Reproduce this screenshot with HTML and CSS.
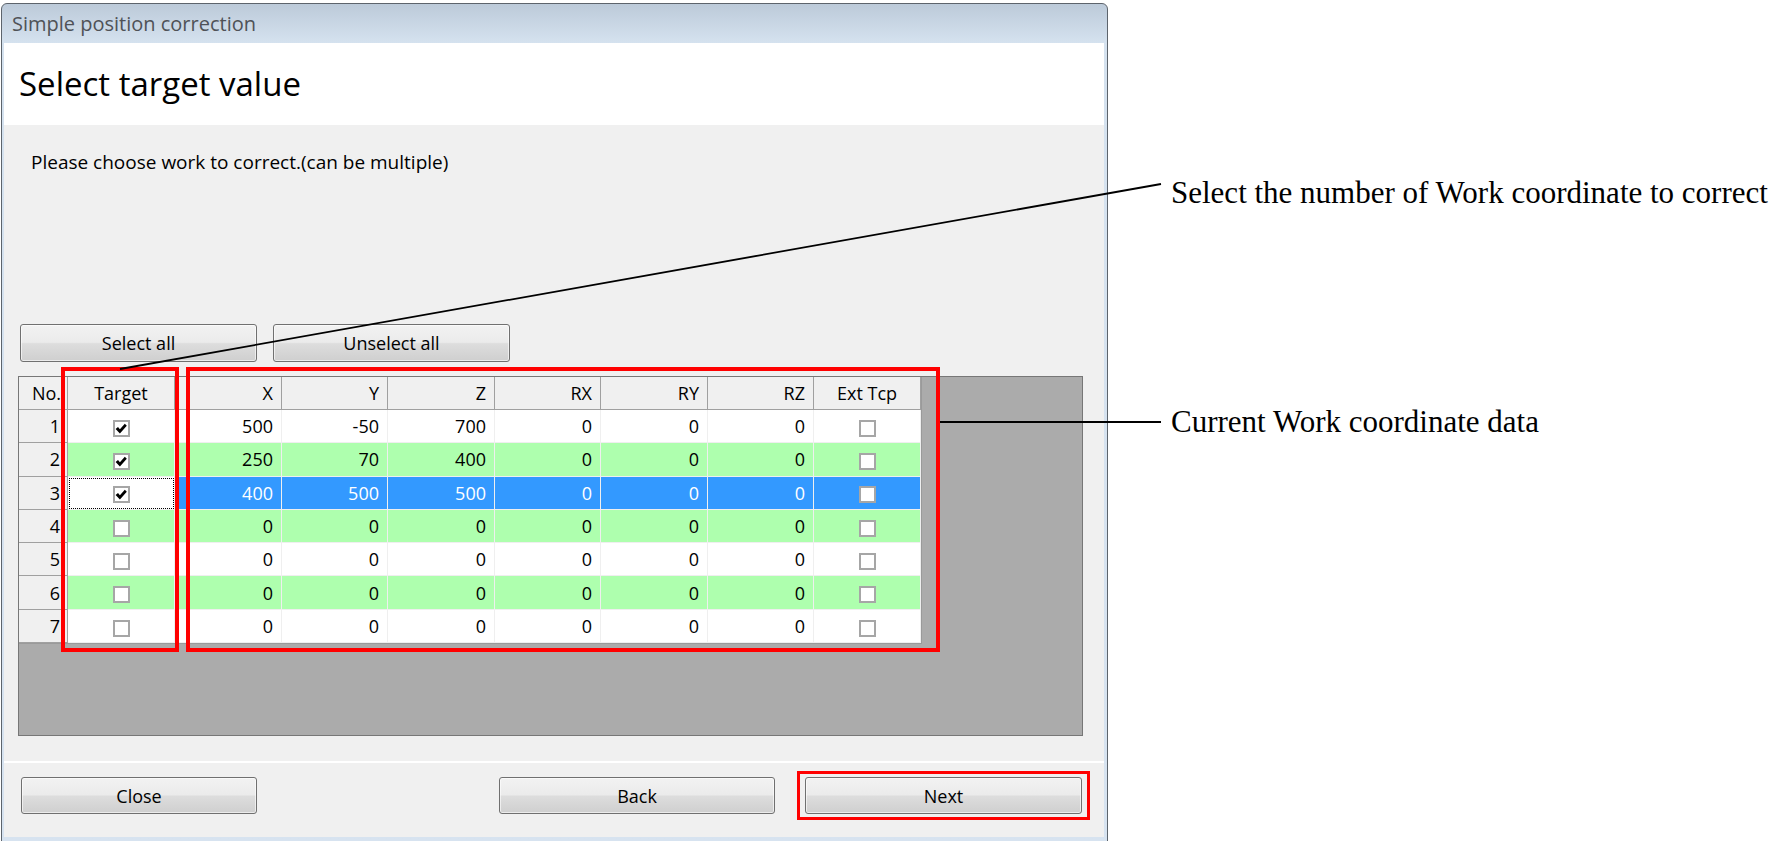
FILE: index.html
```html
<!DOCTYPE html>
<html lang="en">
<head>
    <meta charset="UTF-8">
    <title>Simple position correction</title>
    <link rel="stylesheet" href="styles.css">
</head>
<body>
    <div class="dialog">
        <div class="titlebar">Simple position correction</div>

        <div class="client">
            <div class="header">
                <h1>Select target value</h1>
            </div>

            <div class="main">
                <p class="hint">Please choose work to correct.(can be multiple)</p>

                <div class="select-row">
                    <button class="btn btn-select">Select all</button>
                    <button class="btn btn-select">Unselect all</button>
                </div>

                <div class="grid-area">
                    <table class="grid">
                        <colgroup>
                            <col class="col-no">
                            <col class="col-w"><col class="col-w"><col class="col-n">
                            <col class="col-w"><col class="col-n"><col class="col-w">
                            <col class="col-n"><col class="col-w">
                        </colgroup>
                        <thead>
                            <tr>
                                <th class="num">No.</th>
                                <th class="mid">Target</th>
                                <th>X</th>
                                <th>Y</th>
                                <th>Z</th>
                                <th>RX</th>
                                <th>RY</th>
                                <th>RZ</th>
                                <th class="mid">Ext Tcp</th>
                            </tr>
                        </thead>
                        <tbody>
                            <tr>
                                <td class="num">1</td>
                                <td class="mid"><span class="chk"><svg class="tick" viewBox="0 0 12 11"><path d="M0.6 5.9 L3 3.9 L4.9 6.2 L9.8 0.7 L11.8 2.8 L4.9 10.4 Z"/></svg></span></td>
                                <td>500</td><td>-50</td><td>700</td><td>0</td><td>0</td><td>0</td>
                                <td class="mid"><span class="chk"></span></td>
                            </tr>
                            <tr class="alt">
                                <td class="num">2</td>
                                <td class="mid"><span class="chk"><svg class="tick" viewBox="0 0 12 11"><path d="M0.6 5.9 L3 3.9 L4.9 6.2 L9.8 0.7 L11.8 2.8 L4.9 10.4 Z"/></svg></span></td>
                                <td>250</td><td>70</td><td>400</td><td>0</td><td>0</td><td>0</td>
                                <td class="mid"><span class="chk"></span></td>
                            </tr>
                            <tr class="current">
                                <td class="num">3</td>
                                <td class="mid focus"><span class="chk"><svg class="tick" viewBox="0 0 12 11"><path d="M0.6 5.9 L3 3.9 L4.9 6.2 L9.8 0.7 L11.8 2.8 L4.9 10.4 Z"/></svg></span></td>
                                <td>400</td><td>500</td><td>500</td><td>0</td><td>0</td><td>0</td>
                                <td class="mid"><span class="chk"></span></td>
                            </tr>
                            <tr class="alt">
                                <td class="num">4</td>
                                <td class="mid"><span class="chk"></span></td>
                                <td>0</td><td>0</td><td>0</td><td>0</td><td>0</td><td>0</td>
                                <td class="mid"><span class="chk"></span></td>
                            </tr>
                            <tr>
                                <td class="num">5</td>
                                <td class="mid"><span class="chk"></span></td>
                                <td>0</td><td>0</td><td>0</td><td>0</td><td>0</td><td>0</td>
                                <td class="mid"><span class="chk"></span></td>
                            </tr>
                            <tr class="alt">
                                <td class="num">6</td>
                                <td class="mid"><span class="chk"></span></td>
                                <td>0</td><td>0</td><td>0</td><td>0</td><td>0</td><td>0</td>
                                <td class="mid"><span class="chk"></span></td>
                            </tr>
                            <tr>
                                <td class="num">7</td>
                                <td class="mid"><span class="chk"></span></td>
                                <td>0</td><td>0</td><td>0</td><td>0</td><td>0</td><td>0</td>
                                <td class="mid"><span class="chk"></span></td>
                            </tr>
                        </tbody>
                    </table>
                </div>
            </div>

            <div class="footer">
                <button class="btn btn-close">Close</button>
                <button class="btn btn-back">Back</button>
                <button class="btn btn-next">Next</button>
            </div>
        </div>
    </div>

    <!-- annotation overlay -->
    <div class="mark mark-target"></div>
    <div class="mark mark-data"></div>
    <div class="mark mark-next"></div>

    <svg class="callouts" width="1776" height="841">
        <line x1="120" y1="369" x2="1161" y2="184" />
        <line x1="940" y1="422" x2="1161" y2="422" />
    </svg>

    <p class="note note-select">Select the number of Work coordinate to correct</p>
    <p class="note note-current">Current Work coordinate data</p>
</body>
</html>
```

FILE: styles.css
```css
html, body {
    margin: 0;
    padding: 0;
    height: 100%;
    overflow: hidden;
    background: #fff;
}

body {
    position: relative;
    font-family: "Open Sans", "Noto Sans", sans-serif;
    color: #000;
}

/* Window frame */
.dialog {
    margin: 3px 0 0 1px;
    width: 1107px;
    height: 860px;
    box-sizing: border-box;
    border: 1px solid #5d646c;
    border-radius: 6px 6px 0 0;
    padding: 0 3px 0 2px;
    background: linear-gradient(#bccad9 0, #d5e2ef 39px, #d7e3f0 100%);
}

.titlebar {
    height: 39px;
    line-height: 39px;
    padding-left: 8px;
    font-size: 20px;
    color: #4f5257;
}

.client {
    background: #f0f0f0;
}

.header {
    background: #fff;
    height: 82px;
    box-sizing: border-box;
    padding: 18px 0 0 15px;
}

.header h1 {
    margin: 0;
    font-size: 33px;
    font-weight: normal;
    line-height: 45px;
}

.main {
    padding: 25px 21px 25px 14px;
}

.hint {
    margin: 0 0 0 13px;
    font-size: 19px;
    line-height: 24px;
}

/* Buttons */
.btn {
    font-family: "Open Sans", "Noto Sans", sans-serif;
    font-size: 18px;
    color: #000;
    border: 1px solid #707070;
    border-radius: 3px;
    background: linear-gradient(#f2f2f2 0%, #ebebeb 48%, #dddddd 52%, #cfcfcf 100%);
    box-shadow: inset 0 0 0 1px rgba(255, 255, 255, 0.6);
    padding: 0;
    cursor: pointer;
}

.select-row {
    display: flex;
    gap: 16px;
    margin: 150px 0 0 2px;
}

.btn-select {
    width: 237px;
    height: 38px;
}

/* Grid */
.grid-area {
    margin-top: 14px;
    height: 360px;
    box-sizing: border-box;
    border: 1px solid #777;
    background: #ababab;
}

.grid {
    border-collapse: separate;
    border-spacing: 0;
    table-layout: fixed;
    width: 903px;
    font-size: 18px;
    border-right: 1px solid #9a9a9a;
    border-bottom: 1px solid #9a9a9a;
}

.col-no { width: 49px; }
.col-w { width: 107px; }
.col-n { width: 106px; }

.grid th,
.grid td {
    padding: 0 8px 0 0;
    text-align: right;
    white-space: nowrap;
    box-sizing: border-box;
}

.grid th {
    font-weight: normal;
    background: #f0f0f0;
    border-right: 1px solid #a0a0a0;
    border-bottom: 1px solid #a0a0a0;
}

.grid thead tr {
    height: 33px;
}

.grid tbody tr {
    height: 33.3px;
    background: #fff;
}

.grid tbody tr.alt {
    background: #aeffae;
}

.grid tbody tr.current {
    background: #3399ff;
    color: #fff;
}

.grid td {
    border-right: 1px solid #efefef;
    border-bottom: 1px solid #efefef;
}

.grid .mid {
    text-align: center;
    padding: 0;
}

.grid td.num {
    background: #f0f0f0;
    color: #000;
    padding-right: 7px;
    border-right: 1px solid #a0a0a0;
    border-bottom: 1px solid #a0a0a0;
}

.grid th.num {
    padding-right: 6px;
}

.grid td.focus {
    background: #fff;
    outline: 1px dotted #000;
    outline-offset: -2px;
}

.chk {
    display: inline-block;
    width: 17px;
    height: 17px;
    box-sizing: border-box;
    border: 2px solid #a6a6a6;
    background: #fff;
    vertical-align: middle;
    position: relative;
}

.tick {
    position: absolute;
    left: 0;
    top: 1px;
    width: 12px;
    height: 11px;
    fill: #000;
}

/* Footer */
.footer {
    display: flex;
    border-top: 2px solid #fff;
    padding: 14px 22px 23px 17px;
}

.btn-close {
    width: 236px;
    height: 37px;
}

.btn-back {
    width: 276px;
    height: 37px;
    margin-left: auto;
}

.btn-next {
    width: 277px;
    height: 37px;
    margin-left: 30px;
}

/* Annotations */
.mark {
    position: absolute;
    box-sizing: border-box;
    border: 4px solid #ff0000;
}

.mark-target {
    left: 61px;
    top: 367px;
    width: 118px;
    height: 285px;
}

.mark-data {
    left: 186px;
    top: 367px;
    width: 754px;
    height: 285px;
}

.mark-next {
    left: 797px;
    top: 771px;
    width: 293px;
    height: 49px;
    border-width: 3px;
}

.callouts {
    position: absolute;
    left: 0;
    top: 0;
    pointer-events: none;
}

.callouts line {
    stroke: #000;
    stroke-width: 1.8;
}

.note {
    position: absolute;
    left: 1171px;
    margin: 0;
    font-family: "Liberation Serif", "Times New Roman", serif;
    font-size: 31px;
    line-height: 31px;
    white-space: nowrap;
}

.note-select {
    top: 177px;
}

.note-current {
    top: 406px;
}
```
